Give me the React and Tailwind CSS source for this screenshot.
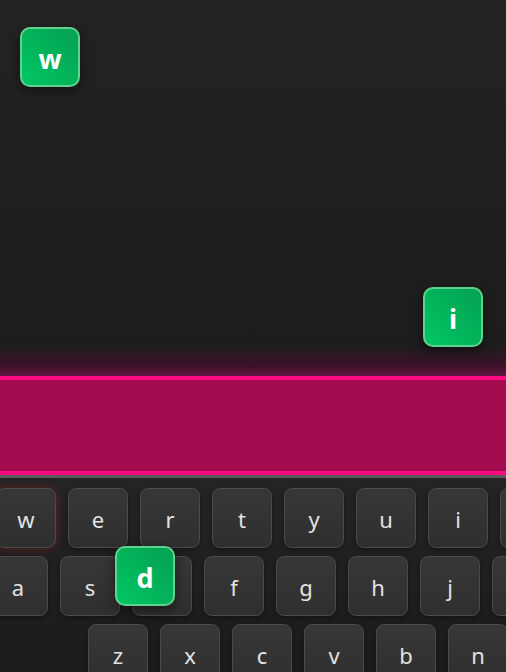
const rows = [
  { keys: ['q', 'w', 'e', 'r', 't', 'y', 'u', 'i', 'o', 'p'], offset: 'ml-[-76px]' },
  { keys: ['a', 's', 'd', 'f', 'g', 'h', 'j', 'k', 'l'], offset: 'ml-[-12px]' },
  { keys: ['z', 'x', 'c', 'v', 'b', 'n', 'm'], offset: 'ml-[88px]' },
];

function Key({ label }) {
  const hot = label === 'w';
  return (
    <div
      className={`flex h-[60px] w-[60px] shrink-0 items-center justify-center rounded-lg border border-[#4a4a4a] bg-gradient-to-b from-[#373737] to-[#2f2f2f] pt-[2px] text-[22px] leading-none text-[#e2e2e2] ${
        hot ? 'shadow-[0_0_8px_rgba(200,30,40,0.4)]' : 'shadow-[0_2px_4px_rgba(0,0,0,0.35)]'
      }`}
    >
      {label}
    </div>
  );
}

function Tile({ letter, className }) {
  return (
    <div
      className={`absolute flex h-[60px] w-[60px] items-center justify-center rounded-[10px] border-2 border-[#5fd28f] bg-gradient-to-tr from-[#00c765] to-[#05a050] pt-[2px] text-[27px] leading-none font-bold text-white shadow-[0_4px_12px_rgba(0,0,0,0.5)] ${className}`}
    >
      {letter}
    </div>
  );
}

export default function App() {
  return (
    <div className="relative h-[672px] w-[506px] overflow-hidden bg-[#1e1e1e] font-['Noto_Sans',sans-serif]">
      {/* play area */}
      <div className="h-[376px] bg-[linear-gradient(to_bottom,#232323_0px,#1d1d1d_345px,#3d1229_366px,#601540_376px)]" />

      {/* hit band */}
      <div className="h-[99px] border-y-4 border-[#ff0a80] bg-[#a30d50]" />
      <div className="h-[3px] bg-[#5c5c5c]" />

      {/* keyboard */}
      <div className="flex h-[194px] flex-col gap-2 bg-gradient-to-b from-[#242424] to-[#1b1b1b] pt-[10px]">
        {rows.map((row, i) => (
          <div key={i} className={`flex gap-3 ${row.offset}`}>
            {row.keys.map((k) => (
              <Key key={k} label={k} />
            ))}
          </div>
        ))}
      </div>

      {/* falling tiles */}
      <Tile letter="w" className="left-[20px] top-[27px]" />
      <Tile letter="i" className="left-[423px] top-[287px]" />
      <Tile letter="d" className="left-[115px] top-[546px]" />
    </div>
  );
}
